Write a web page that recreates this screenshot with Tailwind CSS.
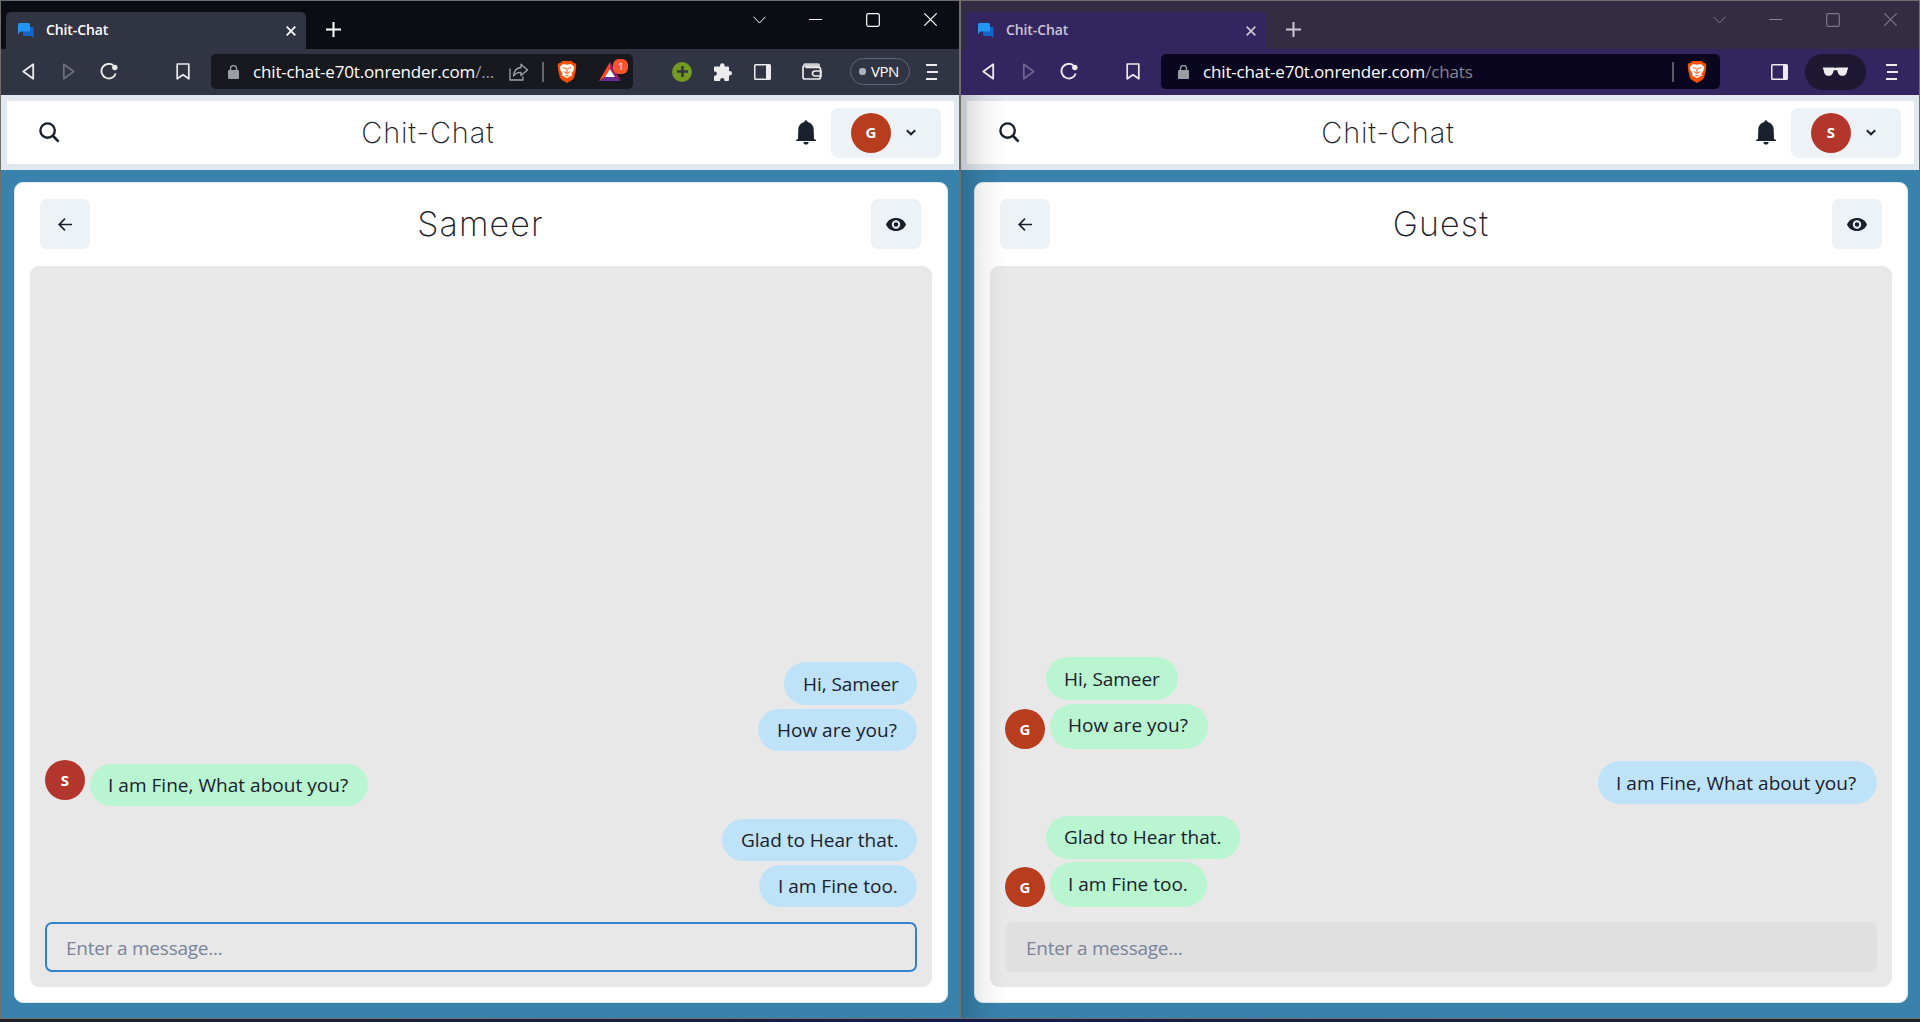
<!DOCTYPE html>
<html lang="en">
<head>
<meta charset="utf-8">
<title>Chit-Chat</title>
<script src="https://cdn.jsdelivr.net/npm/@tailwindcss/browser@4"></script>
</head>
<body class="w-[1920px] h-[1022px] overflow-hidden bg-linear-to-r from-[#1f2128] via-[#131a4a] to-[#1f2128] font-['Open_Sans','Noto_Sans',sans-serif] text-[#1a202c]">

<svg class="hidden">
  <symbol id="favicon" viewBox="0 0 16 15"><path fill="#1565c9" d="M6 4h9.500v11l-2.500-2H6.500a1.500 1.500 0 0 1-1.500-1.500V5z"/><path fill="#2196f3" d="M1.500 0h9A1.500 1.500 0 0 1 12 1.500V8.500H2.500L0 11V1.500A1.500 1.500 0 0 1 1.500 0z"/></symbol>
  <symbol id="x" viewBox="0 0 10 10"><path d="M.7.7l8.600 8.600M9.300.7L.7 9.300" stroke="currentColor" stroke-width="1.700"/></symbol>
  <symbol id="plus" viewBox="0 0 15 15"><path d="M7.500 0v15M0 7.500h15" stroke="currentColor" stroke-width="2"/></symbol>
  <symbol id="tri" viewBox="0 0 13 17"><path d="M11.200 1.300v14.400L1.300 8.500z" fill="none" stroke="currentColor" stroke-width="1.800" stroke-linejoin="round"/></symbol>
  <symbol id="reload" viewBox="0 0 18 17"><path d="M13.200 2.300A7.300 7.300 0 1 0 15.700 10.500" fill="none" stroke="currentColor" stroke-width="1.900"/><circle cx="14.800" cy="4.500" r="2.700" fill="currentColor"/></symbol>
  <symbol id="bookmark" viewBox="0 0 14 17"><path d="M1.200 1h11.600v14.800L7 11.800l-5.800 4z" fill="none" stroke="currentColor" stroke-width="1.700" stroke-linejoin="round"/></symbol>
  <symbol id="lock" viewBox="0 0 11 14"><rect y="5" width="11" height="9" rx="1" fill="currentColor"/><path d="M2.500 6V3.500a3 3 0 0 1 6 0V6" fill="none" stroke="currentColor" stroke-width="1.400"/></symbol>
  <symbol id="share" viewBox="0 0 20 18"><path d="M1 5.500V17h13v-3.500M12 1.200L18.500 7 12 12.500V9.300C8 9.200 6 10.500 4.500 13 4.800 8.500 7 5 12 4.500z" fill="none" stroke="currentColor" stroke-width="1.300" stroke-linejoin="round"/></symbol>
  <symbol id="brave" viewBox="0 0 20 23"><path fill="#fb5004" d="M5.500 1h9l2.200 2 1.800.3.900 2.400-.6 2.300.300 1-2 8.500-1.600 2.200L10 23l-5.500-3.300L2.900 17.500.9 9l.3-1-.6-2.300.9-2.400L3.300 3z"/><path fill="#fff" d="M6 4l4 .8L14 4l3.200 3-.7 3.400-2 3.100.5 2-2.200.9L10 18.300l-2.800-1.900-2.200-.9.500-2-2-3.100L2.800 7z"/><path d="M5.800 7.600l3 .9M14.200 7.600l-3 .9M10 8v4.800M8 12.500l2 .8 2-.8M7 11.300l1 1.200M13 11.300l-1 1.200M8.300 15.200l1.700.8 1.700-.8" fill="none" stroke="#fb5004" stroke-width="1"/></symbol>
  <symbol id="bat" viewBox="0 0 22 19"><path fill="#ff4724" d="M11 0v7L6 15 0 19z"/><path fill="#9e1f63" d="M11 0l11 19-6-4-5-8z"/><path fill="#662d91" d="M0 19l6-4h10l6 4z"/><path fill="#fff" d="M11 7l5 8H6z"/></symbol>
  <symbol id="puzzle" viewBox="0 0 18 18"><path fill="currentColor" d="M6 2.500a2.300 2.300 0 0 1 4.600 0V3.500H14A1 1 0 0 1 15 4.500V8h.700a2.300 2.300 0 0 1 0 4.600H15V17a1 1 0 0 1-1 1h-3.500v-.700a2.200 2.200 0 0 0-4.400 0V18H1a1 1 0 0 1-1-1v-4.200h.700a2.200 2.200 0 0 0 0-4.400H0V4.500a1 1 0 0 1 1-1h5z"/></symbol>
  <symbol id="panel" viewBox="0 0 17 16"><rect x=".75" y=".75" width="15.500" height="14.500" rx=".8" fill="none" stroke="currentColor" stroke-width="1.500"/><path d="M12 1h4.500v14H12z" fill="currentColor"/></symbol>
  <symbol id="wallet" viewBox="0 0 20 17"><path d="M1 3v11a2 2 0 0 0 2 2h13.500a2 2 0 0 0 2-2V6.300a2 2 0 0 0-2-2H3.500M19 8h-6a2.500 2.500 0 0 0 0 5h6z" fill="none" stroke="currentColor" stroke-width="1.700"/><path d="M3 .2h13a2 2 0 0 1 2 2v2H3a2 2 0 0 1 0-4z" fill="currentColor" opacity=".85"/></symbol>
  <symbol id="menu" viewBox="0 0 12 16"><path d="M0 1h11M1 8h11M0 15h11" stroke="currentColor" stroke-width="2"/></symbol>
  <symbol id="glasses" viewBox="0 0 25 9"><path fill="currentColor" d="M0 .5h11l1.500.6L14 .5h11v1.800l-.7.500C24 7 22.500 8.800 19.500 8.800c-3.500 0-4.500-2.500-5.200-5.600h-3.600C10 6.300 9 8.800 5.500 8.800 2.500 8.800 1 7 .7 2.800L0 2.300z"/></symbol>
  <symbol id="wchev" viewBox="0 0 13 8"><path d="M.5.700l6 6.300 6-6.300" fill="none" stroke="currentColor"/></symbol>
  <symbol id="wmax" viewBox="0 0 14 14"><rect x=".7" y=".7" width="12.600" height="12.600" rx="1.500" fill="none" stroke="currentColor" stroke-width="1.200"/></symbol>
  <symbol id="wclose" viewBox="0 0 13 13"><path d="M.3.300l12.400 12.400M12.700.3L.3 12.700" stroke="currentColor" stroke-width="1.200"/></symbol>
  <symbol id="search" viewBox="0 0 21 21"><circle cx="8.600" cy="8.600" r="7.200" fill="none" stroke="currentColor" stroke-width="2.400"/><path d="M13.800 13.800l5.800 5.800" stroke="currentColor" stroke-width="2.700"/></symbol>
  <symbol id="bell" viewBox="0 0 20 25"><path fill="currentColor" d="M10 .3c1 0 1.500.7 1.600 1.700C15.300 3 17.600 5.600 17.700 9.500L18 19l2 1v1H0v-1l2-1 .3-9.500C2.400 5.600 4.700 3 8.400 2 8.500 1 9 .3 10 .3zM7.300 22h5.400c-.2 1.700-1.200 2.600-2.700 2.600S7.500 23.700 7.300 22z"/></symbol>
  <symbol id="chev" viewBox="0 0 10 7"><path d="M.8 1.200L5 5.300l4.200-4.100" fill="none" stroke="currentColor" stroke-width="1.900"/></symbol>
  <symbol id="arrow" viewBox="0 0 14 13"><path d="M14 6.500H1.500M7 .7L1.200 6.500 7 12.300" fill="none" stroke="currentColor" stroke-width="1.700"/></symbol>
  <symbol id="eye" viewBox="0 0 20 13"><path fill="currentColor" fill-rule="evenodd" d="M10 0c4.700 0 8.300 2.300 10 6.500-1.700 4.200-5.300 6.500-10 6.500S1.700 10.700 0 6.500C1.700 2.300 5.300 0 10 0zm0 2.300a4.200 4.200 0 1 0 0 8.400 4.200 4.200 0 0 0 0-8.400zm0 1.900a2.300 2.300 0 1 1 0 4.600 2.300 2.300 0 0 1 0-4.600z"/></symbol>
</svg>

<div class="flex h-[1019px]">

  <!-- Guest's window -->
  <section class="w-[960px] h-full border border-[#6f706e] flex flex-col">
    <div class="h-12 bg-[#0b0c14] flex text-white">
      <div class="ml-[5px] mt-[11px] w-[300px] h-[37px] rounded-t-[5px] bg-[#313443] flex items-center pl-3 pr-[10px]">
        <svg class="w-4 h-[15px]"><use href="#favicon"/></svg>
        <span class="ml-3 text-[14px] font-semibold tracking-[-0.1px] leading-5 mb-px">Chit-Chat</span>
        <svg class="ml-auto w-[10px] h-[10px]"><use href="#x"/></svg>
      </div>
      <svg class="ml-[20px] mt-[21px] w-[15px] h-[15px]"><use href="#plus"/></svg>
      <div class="ml-auto mr-[22px] mt-[11px] h-[15px] flex items-center">
        <svg class="w-[13px] h-2"><use href="#wchev"/></svg>
        <span class="ml-[43px] w-[13px] h-px bg-white"></span>
        <svg class="ml-[44px] w-[14px] h-[14px]"><use href="#wmax"/></svg>
        <svg class="ml-[44px] w-[13px] h-[13px]"><use href="#wclose"/></svg>
      </div>
    </div>
    <div class="h-[46px] pb-px bg-[#313443] flex items-center text-[#ececec]">
      <svg class="ml-[21px] w-[13px] h-[17px]"><use href="#tri"/></svg>
      <svg class="ml-[27px] w-[13px] h-[17px] -scale-x-100 text-[#6c6f7b]"><use href="#tri"/></svg>
      <svg class="ml-[25px] w-[18px] h-[17px]"><use href="#reload"/></svg>
      <svg class="ml-[58px] mr-px w-[14px] h-[17px]"><use href="#bookmark"/></svg>
      <div class="ml-[20px] w-[422px] h-[35px] rounded-[5px] bg-[#17191f] flex items-center">
        <svg class="ml-[17px] w-[11px] h-[14px] text-[#9b9da5]"><use href="#lock"/></svg>
        <span class="ml-[14px] w-[242px] text-[17px] tracking-[-0.16px] whitespace-nowrap text-white">chit-chat-e70t.onrender.com<span class="text-[#9b9da5]">/...</span></span>
        <svg class="ml-[14px] w-5 h-[18px] text-[#a2a4a8]"><use href="#share"/></svg>
        <span class="ml-[13px] w-[2px] h-5 bg-[#636569]"></span>
        <svg class="ml-[13px] w-5 h-[23px]"><use href="#brave"/></svg>
        <div class="relative ml-[22px] w-[22px] h-[19px]">
          <svg class="w-[22px] h-[19px]"><use href="#bat"/></svg>
          <span class="absolute left-[14px] -top-[3px] w-[15px] h-[15px] rounded-[6px] bg-[#fb542b] text-white text-[9px] leading-[15px] text-center font-['Inter',sans-serif]">1</span>
        </div>
      </div>
      <div class="ml-[39px] w-5 h-5 rounded-full bg-[#739a22] text-[#313443] grid place-items-center"><svg class="w-[11px] h-[11px]" viewBox="0 0 11 11"><path d="M5.500 0v11M0 5.500h11" stroke="currentColor" stroke-width="2.600"/></svg></div>
      <svg class="ml-[22px] w-[18px] h-[18px]"><use href="#puzzle"/></svg>
      <svg class="ml-[22px] w-[17px] h-4"><use href="#panel"/></svg>
      <svg class="ml-[31px] w-5 h-[17px]"><use href="#wallet"/></svg>
      <div class="ml-[28px] w-[60px] h-[27px] rounded-full border border-[#62677d] flex items-center pl-2 text-[15px]">
        <span class="w-[7px] h-[7px] rounded-[3px] bg-[#adb0c0]"></span><span class="ml-[5px] text-white tracking-[-0.5px]">VPN</span>
      </div>
      <svg class="ml-[16px] w-3 h-4"><use href="#menu"/></svg>
    </div>
    <header class="h-[75px] border-6 border-[#e2e8f0] border-r-5 bg-white flex items-center justify-between pl-[32px] pr-[13px]">
      <svg class="w-[21px] h-[21px]"><use href="#search"/></svg>
      <h1 class="font-['Inter',sans-serif] font-extralight text-[29px] leading-[38px] tracking-[0.8px]">Chit-Chat</h1>
      <div class="flex items-center gap-[15px]">
        <svg class="w-5 h-[25px]"><use href="#bell"/></svg>
        <button class="w-[110px] h-[50px] rounded-[7px] bg-[#edf2f7] flex items-center pl-5">
          <span class="w-10 h-10 rounded-full bg-[#b83c1e] text-white text-[15px] font-bold grid place-items-center">G</span>
          <svg class="ml-[15px] w-[10px] h-[7px]"><use href="#chev"/></svg>
        </button>
      </div>
    </header>
    <main class="flex-1 bg-[#3882ac] pt-3 pl-[13px] pr-[11px]">
      <div class="h-[821px] w-[934px] rounded-[9px] border border-[#e2e8f0] bg-white px-[15px] pt-4 flex flex-col">
        <div class="h-[50px] pl-[10px] pr-[11px] flex items-center justify-between">
          <button class="w-[50px] h-[50px] rounded-[7px] bg-[#edf2f7] grid place-items-center"><svg class="w-[14px] h-[13px]"><use href="#arrow"/></svg></button>
          <h2 class="font-['Inter',sans-serif] font-extralight text-[34px] leading-[44px] tracking-[1.1px]">Sameer</h2>
          <button class="w-[50px] h-[50px] rounded-[7px] bg-[#edf2f7] grid place-items-center"><svg class="w-5 h-[13px]"><use href="#eye"/></svg></button>
        </div>
        <div class="mt-[17px] h-[721px] rounded-[9px] bg-[#e8e8e8] p-[15px] flex flex-col justify-end text-[19px]">
          <div class="flex flex-col items-end whitespace-nowrap">
            <p class="h-[43px] w-[133px] rounded-full bg-[#bee3f8] pl-[19px] leading-[44px] tracking-[-0.05px]">Hi, Sameer</p>
            <p class="mt-1 h-[42px] w-[159px] rounded-full bg-[#bee3f8] pl-[19px] leading-[43px]">How are you?</p>
            <div class="self-start mt-[9px] flex">
              <span class="w-10 h-10 rounded-full bg-[#b3362c] text-white text-[15px] font-bold grid place-items-center">S</span>
              <p class="ml-[5px] mt-1 h-[42px] w-[278px] rounded-full bg-[#b9f5d0] pl-[18px] leading-[43px] tracking-[0.03px]">I am Fine, What about you?</p>
            </div>
            <p class="mt-[13px] h-[42px] w-[195px] rounded-full bg-[#bee3f8] pl-[19px] leading-[43px]">Glad to Hear that.</p>
            <p class="mt-1 h-[42px] w-[158px] rounded-full bg-[#bee3f8] pl-[19px] leading-[43px]">I am Fine too.</p>
          </div>
          <div class="mt-[15px] h-[50px] rounded-[7px] border-2 border-[#3182ce] pl-[19px] pt-px leading-[47px] tracking-[-0.23px] text-[#78849b]">Enter a message...</div>
        </div>
      </div>
    </main>
  </section>

  <!-- Sameer's private window -->
  <section class="relative w-[960px] h-full border border-[#6f706e] flex flex-col">
    <div class="h-12 bg-[#322d43] flex text-[#cac7d3]">
      <div class="ml-[5px] mt-[11px] w-[300px] h-[37px] rounded-t-[5px] bg-[#33255f] flex items-center pl-3 pr-[10px]">
        <svg class="w-4 h-[15px]"><use href="#favicon"/></svg>
        <span class="ml-3 text-[14px] font-semibold tracking-[-0.1px] leading-5 mb-px">Chit-Chat</span>
        <svg class="ml-auto w-[10px] h-[10px]"><use href="#x"/></svg>
      </div>
      <svg class="ml-[20px] mt-[21px] w-[15px] h-[15px]"><use href="#plus"/></svg>
      <div class="ml-auto mr-[22px] mt-[11px] h-[15px] flex items-center text-[#7d7989]">
        <svg class="w-[13px] h-2"><use href="#wchev"/></svg>
        <span class="ml-[43px] w-[13px] h-px bg-[#8b8796]"></span>
        <svg class="ml-[44px] w-[14px] h-[14px]"><use href="#wmax"/></svg>
        <svg class="ml-[44px] w-[13px] h-[13px]"><use href="#wclose"/></svg>
      </div>
    </div>
    <div class="h-[46px] pb-px bg-[#33255f] flex items-center text-[#ececec]">
      <svg class="ml-[21px] w-[13px] h-[17px]"><use href="#tri"/></svg>
      <svg class="ml-[27px] w-[13px] h-[17px] -scale-x-100 text-[#6e6490]"><use href="#tri"/></svg>
      <svg class="ml-[25px] w-[18px] h-[17px]"><use href="#reload"/></svg>
      <svg class="ml-[48px] mr-px w-[14px] h-[17px]"><use href="#bookmark"/></svg>
      <div class="ml-[20px] w-[559px] h-[35px] rounded-[5px] bg-[#0b0620] flex items-center">
        <svg class="ml-[17px] w-[11px] h-[14px] text-[#9b9da5]"><use href="#lock"/></svg>
        <span class="ml-[14px] text-[17px] tracking-[-0.16px] whitespace-nowrap text-white">chit-chat-e70t.onrender.com<span class="text-[#87858f]">/chats</span></span>
        <span class="ml-auto w-[2px] h-5 bg-[#5c5968]"></span>
        <svg class="ml-[13px] mr-[13px] w-5 h-[23px]"><use href="#brave"/></svg>
      </div>
      <svg class="ml-[51px] w-[17px] h-4"><use href="#panel"/></svg>
      <div class="ml-[17px] w-[61px] h-9 rounded-full bg-[#1e1832] grid place-items-center"><svg class="w-[25px] h-[9px]"><use href="#glasses"/></svg></div>
      <svg class="ml-[20px] w-3 h-4"><use href="#menu"/></svg>
    </div>
    <header class="h-[75px] border-6 border-[#e2e8f0] border-r-5 bg-white flex items-center justify-between pl-[32px] pr-[13px]">
      <svg class="w-[21px] h-[21px]"><use href="#search"/></svg>
      <h1 class="font-['Inter',sans-serif] font-extralight text-[29px] leading-[38px] tracking-[0.8px]">Chit-Chat</h1>
      <div class="flex items-center gap-[15px]">
        <svg class="w-5 h-[25px]"><use href="#bell"/></svg>
        <button class="w-[110px] h-[50px] rounded-[7px] bg-[#edf2f7] flex items-center pl-5">
          <span class="w-10 h-10 rounded-full bg-[#b3362c] text-white text-[15px] font-bold grid place-items-center">S</span>
          <svg class="ml-[15px] w-[10px] h-[7px]"><use href="#chev"/></svg>
        </button>
      </div>
    </header>
    <main class="flex-1 bg-[#3882ac] pt-3 pl-[13px] pr-[11px]">
      <div class="h-[821px] w-[934px] rounded-[9px] border border-[#e2e8f0] bg-white px-[15px] pt-4 flex flex-col">
        <div class="h-[50px] px-[10px] flex items-center justify-between">
          <button class="w-[50px] h-[50px] rounded-[7px] bg-[#edf2f7] grid place-items-center"><svg class="w-[14px] h-[13px]"><use href="#arrow"/></svg></button>
          <h2 class="font-['Inter',sans-serif] font-extralight text-[34px] leading-[44px] tracking-[1.1px]">Guest</h2>
          <button class="w-[50px] h-[50px] rounded-[7px] bg-[#edf2f7] grid place-items-center"><svg class="w-5 h-[13px]"><use href="#eye"/></svg></button>
        </div>
        <div class="mt-[17px] h-[721px] rounded-[9px] bg-[#e8e8e8] p-[15px] flex flex-col justify-end text-[19px]">
          <div class="flex flex-col items-start whitespace-nowrap">
            <p class="ml-[41px] h-[43px] w-[132px] rounded-full bg-[#b9f5d0] pl-[18px] leading-[45px] tracking-[-0.05px]">Hi, Sameer</p>
            <div class="mt-1 flex items-end">
              <span class="w-10 h-10 rounded-full bg-[#b83c1e] text-white text-[15px] font-bold grid place-items-center">G</span>
              <p class="ml-[5px] h-[45px] w-[158px] rounded-full bg-[#b9f5d0] pl-[18px] leading-[43px]">How are you?</p>
            </div>
            <p class="self-end mt-3 h-[43px] w-[279px] rounded-full bg-[#bee3f8] pl-[18px] leading-[44px] tracking-[0.03px]">I am Fine, What about you?</p>
            <p class="ml-[41px] mt-3 h-[43px] w-[194px] rounded-full bg-[#b9f5d0] pl-[18px] leading-[43px]">Glad to Hear that.</p>
            <div class="mt-[3px] flex items-end">
              <span class="w-10 h-10 rounded-full bg-[#b83c1e] text-white text-[15px] font-bold grid place-items-center">G</span>
              <p class="ml-[5px] h-[45px] w-[157px] rounded-full bg-[#b9f5d0] pl-[18px] leading-[45px]">I am Fine too.</p>
            </div>
          </div>
          <div class="mt-[15px] h-[50px] rounded-[7px] bg-[#e0e0e0] pl-[21px] pt-[3px] leading-[47px] tracking-[-0.23px] text-[#78849b]">Enter a message...</div>
        </div>
      </div>
    </main>
    <div class="absolute left-0 top-[94px] bottom-0 w-[44px] bg-linear-to-r from-black/15 via-black/5 to-transparent"></div>
  </section>
</div>
</body>
</html>
